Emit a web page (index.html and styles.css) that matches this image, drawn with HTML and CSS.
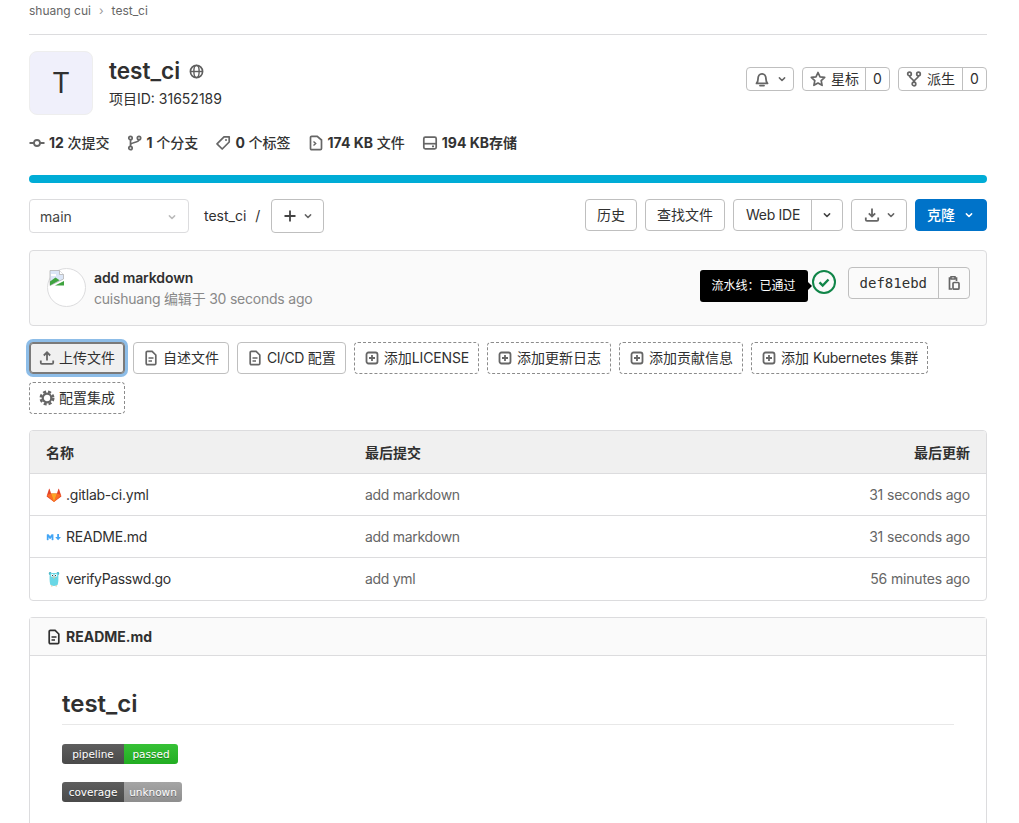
FILE: index.html
```html
<!DOCTYPE html>
<html lang="zh">
<head>
<meta charset="utf-8">
<title>test_ci</title>
<link rel="stylesheet" href="styles.css">
</head>
<body>
<svg class="defs" width="0" height="0">
  <symbol id="chev" viewBox="0 0 16 16"><path d="M4.500 6.500 8 10l3.500-3.500" fill="none" stroke="currentColor" stroke-width="2" stroke-linecap="round" stroke-linejoin="round"/></symbol>
  <symbol id="doc" viewBox="0 0 16 16"><path d="M3.200 2.500c0-.7.500-1.200 1.200-1.200h4.700l3.700 3.700v8.500c0 .7-.500 1.200-1.200 1.200H4.400c-.7 0-1.200-.500-1.200-1.200z" fill="none" stroke="currentColor" stroke-width="1.700"/><path d="M5.500 8h5M5.500 11h3.500" stroke="currentColor" stroke-width="1.600"/></symbol>
  <symbol id="plusbox" viewBox="0 0 16 16"><rect x="2.500" y="2.500" width="11" height="11" rx="2" fill="none" stroke="currentColor" stroke-width="1.800"/><path d="M8 5v6M5 8h6" stroke="currentColor" stroke-width="1.800"/></symbol>
</svg>
<div class="page">
  <nav class="crumbs"><span>shuang cui</span><span class="sep">›</span><span>test_ci</span></nav>

  <header class="proj">
    <div class="avatar">T</div>
    <div class="proj-info">
      <h1 class="proj-title">test_ci <svg class="ico globe" viewBox="0 0 16 16"><circle cx="8" cy="8" r="6.500" fill="none" stroke="currentColor" stroke-width="1.800"/><ellipse cx="8" cy="8" rx="2.800" ry="6.500" fill="none" stroke="currentColor" stroke-width="1.500"/><path d="M2 8h12" stroke="currentColor" stroke-width="1.500"/></svg></h1>
      <div class="proj-id">项目ID: 31652189</div>
    </div>
    <div class="proj-actions">
      <button class="btn small bell"><svg class="ico" viewBox="0 0 16 16"><path d="M2.500 12.400c1-1 1.500-2 1.500-4.400 0-2.800 1.500-5.200 4-5.200s4 2.400 4 5.200c0 2.400.5 3.400 1.500 4.400z" fill="none" stroke="currentColor" stroke-width="1.800" stroke-linejoin="round"/><path d="M6 14.600h4" stroke="currentColor" stroke-width="1.800" stroke-linecap="round"/></svg><svg class="chev"><use href="#chev"/></svg></button>
      <div class="split small"><span class="seg"><svg class="ico" viewBox="0 0 16 16"><path d="m8 1.500 2 4.300 4.700.6-3.500 3.200.9 4.700L8 12l-4.100 2.300.9-4.700-3.500-3.200L6 5.800z" fill="none" stroke="currentColor" stroke-width="1.700" stroke-linejoin="round"/></svg>星标</span><span class="seg count">0</span></div>
      <div class="split small"><span class="seg wide"><svg class="ico" viewBox="0 0 16 16"><circle cx="3.500" cy="3" r="1.800" fill="none" stroke="currentColor" stroke-width="1.700"/><circle cx="12.500" cy="3" r="1.800" fill="none" stroke="currentColor" stroke-width="1.700"/><circle cx="8" cy="13" r="1.800" fill="none" stroke="currentColor" stroke-width="1.700"/><path d="M3.500 4.800c0 3 4.500 2.800 4.500 6.400M12.500 4.800c0 3-4.500 2.800-4.500 6.400" fill="none" stroke="currentColor" stroke-width="1.700"/></svg>派生</span><span class="seg count">0</span></div>
    </div>
  </header>

  <div class="stats">
    <span class="stat"><svg class="ico" viewBox="0 0 16 16"><circle cx="8" cy="8" r="3" fill="none" stroke="currentColor" stroke-width="1.800"/><path d="M0.500 8h4.500M11 8h4.500" stroke="currentColor" stroke-width="1.800"/></svg><span><b>12</b> 次提交</span></span>
    <span class="stat"><svg class="ico" viewBox="0 0 16 16"><circle cx="3.500" cy="3" r="1.700" fill="none" stroke="currentColor" stroke-width="1.700"/><circle cx="3.500" cy="13" r="1.700" fill="none" stroke="currentColor" stroke-width="1.700"/><circle cx="12" cy="3" r="1.700" fill="none" stroke="currentColor" stroke-width="1.700"/><path d="M3.500 4.700v6.600M12 4.700c0 3-8.500 2.500-8.500 5" fill="none" stroke="currentColor" stroke-width="1.700"/></svg><span><b>1</b> 个分支</span></span>
    <span class="stat"><svg class="ico" viewBox="0 0 16 16"><path d="M9 1.800h5.200V7l-7 7-5.200-5.200z" fill="none" stroke="currentColor" stroke-width="1.700" stroke-linejoin="round"/><circle cx="11" cy="5" r="1" fill="currentColor"/></svg><span><b>0</b> 个标签</span></span>
    <span class="stat"><svg class="ico" viewBox="0 0 16 16"><path d="M2.500 2.500c0-.7.500-1.200 1.200-1.200h5.500L13.500 5v8.500c0 .7-.500 1.200-1.200 1.200H3.700c-.7 0-1.200-.500-1.200-1.200z" fill="none" stroke="currentColor" stroke-width="1.700"/><path d="m5.500 6.500 2.200 2-2.200 2" fill="none" stroke="currentColor" stroke-width="1.400"/></svg><span><b>174 KB</b> 文件</span></span>
    <span class="stat"><svg class="ico" viewBox="0 0 16 16"><rect x="1.800" y="2.200" width="12.400" height="11.600" rx="1.500" fill="none" stroke="currentColor" stroke-width="1.700"/><path d="M2 8.700h12" stroke="currentColor" stroke-width="1.700"/><path d="M10 11.300h2" stroke="currentColor" stroke-width="1.700"/></svg><span><b>194 KB存储</b></span></span>
  </div>

  <div class="langbar"></div>

  <div class="tree-bar">
    <div class="branch"><span>main</span><svg class="chev light"><use href="#chev"/></svg></div>
    <span class="path">test_ci</span><span class="slash">/</span>
    <button class="btn add"><svg class="ico" viewBox="0 0 16 16"><path d="M8 2.500v11M2.500 8h11" stroke="currentColor" stroke-width="1.800"/></svg><svg class="chev"><use href="#chev"/></svg></button>
    <div class="tree-actions">
      <button class="btn">历史</button>
      <button class="btn">查找文件</button>
      <div class="split"><span class="seg ide">Web IDE</span><span class="seg caret"><svg class="chev dark"><use href="#chev"/></svg></span></div>
      <button class="btn dl"><svg class="ico" viewBox="0 0 16 16"><path d="M8 1.500V9M4.800 6.300 8 9.500l3.200-3.200" fill="none" stroke="currentColor" stroke-width="1.800"/><path d="M1.800 10.500v2.200c0 .7.500 1.200 1.200 1.200h10c.7 0 1.200-.500 1.200-1.200v-2.200" fill="none" stroke="currentColor" stroke-width="1.800"/></svg><svg class="chev"><use href="#chev"/></svg></button>
      <button class="btn primary">克隆<svg class="chev white"><use href="#chev"/></svg></button>
    </div>
  </div>

  <section class="commit">
    <div class="commit-avatar"><svg class="broken" viewBox="0 0 16 16"><path d="M1 .5h9.500L14.500 4.500V9L1 15.500z" fill="#dbe6f7" stroke="#b4b4b4" stroke-width=".8"/><path d="M2 4h5v2H2z" fill="#fff"/><path d="M1 11.500l5.500-4 4 2.800L1 15.500z" fill="#3fa33f"/><path d="M15 11v4.500H6z" fill="#3fa33f"/><path d="M10.500 .5v4h4" fill="#fff" stroke="#b4b4b4" stroke-width=".8"/></svg></div>
    <div class="commit-text">
      <div class="commit-title">add markdown</div>
      <div class="commit-meta">cuishuang 编辑于 30 seconds ago</div>
    </div>
    <div class="commit-side">
      <div class="pipeline">
        <div class="tooltip">流水线：已通过</div>
        <svg class="status" viewBox="0 0 24 24"><circle cx="12" cy="12" r="11" fill="none" stroke="#108548" stroke-width="2"/><path d="m7.500 12.300 3.200 3.200 5.800-6" fill="none" stroke="#108548" stroke-width="2.400"/></svg>
      </div>
      <div class="split sha"><span class="seg hash">def81ebd</span><span class="seg copy"><svg class="ico" viewBox="0 0 16 16"><path d="M5 3H3.500v11H6" fill="none" stroke="currentColor" stroke-width="1.700"/><path d="M5 1.800h4V4H5z" fill="none" stroke="currentColor" stroke-width="1.500"/><path d="M9 3h1.500v3" fill="none" stroke="currentColor" stroke-width="1.700"/><rect x="7" y="7.500" width="6" height="6.700" rx="1" fill="none" stroke="currentColor" stroke-width="1.700"/></svg></span></div>
    </div>
  </section>

  <div class="quick">
    <button class="btn q focus"><svg class="ico" viewBox="0 0 16 16"><path d="M8 10.500V2.500M4.800 5.500 8 2.300l3.200 3.200" fill="none" stroke="currentColor" stroke-width="1.800"/><path d="M1.800 10.500v2.200c0 .7.500 1.200 1.200 1.200h10c.7 0 1.200-.500 1.200-1.200v-2.200" fill="none" stroke="currentColor" stroke-width="1.800"/></svg><span>上传文件</span></button>
    <button class="btn q"><svg class="ico"><use href="#doc"/></svg><span>自述文件</span></button>
    <button class="btn q"><svg class="ico"><use href="#doc"/></svg><span><span class="lat">CI/CD</span> 配置</span></button>
    <button class="btn q dashed"><svg class="ico"><use href="#plusbox"/></svg><span>添加<span class="lat2">LICENSE</span></span></button>
    <button class="btn q dashed"><svg class="ico"><use href="#plusbox"/></svg><span>添加更新日志</span></button>
    <button class="btn q dashed"><svg class="ico"><use href="#plusbox"/></svg><span>添加贡献信息</span></button>
    <button class="btn q dashed"><svg class="ico"><use href="#plusbox"/></svg><span>添加 <span class="lat3">Kubernetes</span> 集群</span></button>
    <button class="btn q dashed"><svg class="ico" viewBox="0 0 16 16"><circle cx="8" cy="8" r="6.300" fill="none" stroke="currentColor" stroke-width="2.400" stroke-dasharray="3 2"/><circle cx="8" cy="8" r="4.300" fill="none" stroke="currentColor" stroke-width="2.200"/></svg><span>配置集成</span></button>
  </div>

  <table class="files">
    <thead><tr><th class="c1">名称</th><th class="c2">最后提交</th><th class="c3">最后更新</th></tr></thead>
    <tbody>
      <tr><td><span class="fname"><svg class="ficon" viewBox="0 0 16 16"><path d="M8 15 1 9.800c-.3-.2-.4-.500-.3-.9L3 2c.1-.3.500-.3.600 0l1.500 4.600h5.800L12.400 2c.1-.3.500-.3.600 0l2.300 6.900c.1.400 0 .7-.3.900z" fill="#e24329"/><path d="M8 15 .8 8.300l4.300-1.700zM8 15l7.200-6.700-4.300-1.700z" fill="#fc6d26"/><path d="M8 15 5.100 6.600h5.800z" fill="#fca326"/></svg>.gitlab-ci.yml</span></td><td class="msg">add markdown</td><td class="age">31 seconds ago</td></tr>
      <tr><td><span class="fname"><svg class="ficon" viewBox="0 0 16 16"><path d="M1 11V5.500h1.600l1.500 2 1.500-2h1.600V11H5.900V8L4.100 10 2.300 8v3z" fill="#42a5f5" stroke="#42a5f5" stroke-width=".4"/><path d="M11.200 5h1.800v3h2l-2.900 3.200L9.200 8h2z" fill="#42a5f5"/></svg>README.md</span></td><td class="msg">add markdown</td><td class="age">31 seconds ago</td></tr>
      <tr><td><span class="fname tight"><svg class="ficon" viewBox="0 0 16 16"><rect x="2.800" y="1" width="2.600" height="3" rx="1.200" fill="#4db6c6"/><rect x="10.600" y="1" width="2.600" height="3" rx="1.200" fill="#4db6c6"/><path d="M3.800 2.500c1.500-.8 6.900-.8 8.400 0 .4 4 .3 8-.4 10.800-.3 1-1.500 1.700-3.800 1.700s-3.500-.7-3.800-1.700C3.500 10.500 3.400 6.500 3.800 2.500z" fill="#6ad7e5"/><circle cx="6.300" cy="4.500" r="1.400" fill="#fff"/><circle cx="9.700" cy="4.500" r="1.400" fill="#fff"/><circle cx="6.500" cy="4.600" r=".6" fill="#222"/><circle cx="9.500" cy="4.600" r=".6" fill="#222"/><rect x="7.200" y="5.800" width="1.600" height="1.500" fill="#e8c9a0"/><path d="M5 15h1.500M9.500 15H11" stroke="#e8c9a0" stroke-width="1"/></svg>verifyPasswd.go</span></td><td class="msg">add yml</td><td class="age">56 minutes ago</td></tr>
    </tbody>
  </table>

  <section class="readme">
    <div class="readme-head"><svg class="ico"><use href="#doc"/></svg><b>README.md</b></div>
    <div class="readme-body">
      <h2 class="readme-title">test_ci</h2>
      <p class="badge-line"><span class="badge"><span class="bl">pipeline</span><span class="br ok">passed</span></span></p>
      <p class="badge-line"><span class="badge"><span class="bl">coverage</span><span class="br none">unknown</span></span></p>
    </div>
  </section>
</div>
</body>
</html>
```

FILE: styles.css
```css
* { box-sizing: border-box; }
html, body { margin: 0; height: 823px; overflow: hidden; }
body { background: #fff; color: #303030; font: 14px/20px Inter, "Noto Sans CJK SC", sans-serif; }
.defs { position: absolute; }
.page { padding: 0 32px 0 29px; }
.ico { width: 16px; height: 16px; flex: none; color: #666; }
.chev { width: 12px; height: 12px; flex: none; color: #666; }
.chev.light { color: #bbb; }
.chev.dark { color: #444; }
.chev.white { color: #fff; }

.crumbs { height: 35px; padding-top: 1px; border-bottom: 1px solid #dcdcde; font-size: 12px; line-height: 20px; color: #666; display: flex; gap: 8px; align-items: flex-start; }
.crumbs .sep { color: #999; }

.proj { display: flex; margin-top: 16px; }
.avatar { width: 64px; height: 64px; background: #f0f0fb; border: 1px solid #eee; border-radius: 8px; display: flex; align-items: center; justify-content: center; font-size: 28px; color: #303030; }
.proj-info { margin-left: 16px; padding-top: 6px; }
.proj-title { margin: 0; font-size: 22.600px; line-height: 28px; font-weight: 600; display: flex; align-items: center; gap: 9px; }
.globe { width: 15px; height: 15px; color: #5f5f5f; }
.proj-id { margin-top: 4px; }
.proj-actions { margin-left: auto; display: flex; gap: 8px; padding-top: 16px; align-items: flex-start; }

.btn { height: 32px; padding: 0 11px; border: 1px solid #bfbfbf; border-radius: 4px; background: #fff; color: #303030; font: inherit; display: inline-flex; align-items: center; justify-content: center; gap: 5px; }
.btn.small { height: 24px; }
.btn.bell { padding: 0 5px 0 7px; gap: 6px; }
.split { display: inline-flex; height: 32px; border: 1px solid #bfbfbf; border-radius: 4px; background: #fff; }
.split.small { height: 24px; }
.seg { display: inline-flex; align-items: center; padding: 0 6px 0 7px; gap: 5px; }
.seg.wide { padding-right: 7px; }
.seg + .seg { border-left: 1px solid #bfbfbf; }
.count { width: 24px; padding: 0; justify-content: center; }

.stats { display: flex; margin-top: 18px; gap: 17px; line-height: 20px; color: #333; }
.stat { display: inline-flex; align-items: center; gap: 4px; font-weight: 500; white-space: nowrap; }
.stat b { font-weight: 700; }

.langbar { height: 8px; margin-top: 22px; background: #00acd6; border-radius: 4px; }

.tree-bar { display: flex; align-items: flex-start; margin-top: 16px; height: 34px; }
.branch { width: 160px; height: 34px; padding: 1px 10px 0; border: 1px solid #dcdcde; border-radius: 4px; display: flex; align-items: center; justify-content: space-between; color: #444; }
.path { margin: 7px 0 0 15px; }
.slash { margin: 7px 11px 0 9px; }
.btn.add { height: 34px; padding: 0 9px; gap: 4px; width: 53px; }
.add .ico { color: #444; }
.tree-actions { margin-left: auto; display: flex; gap: 8px; }
.ide { padding: 0 11px 0 12px; letter-spacing: -.3px; }
.caret { width: 31px; padding: 0; justify-content: center; }
.btn.dl { padding: 0 9px 0 12px; }
.btn.primary { background: #0073c9; border-color: #0073c9; color: #fff; font-weight: 500; padding: 0 11px; gap: 8px; }

.commit { margin-top: 17px; height: 76px; border: 1px solid #dcdcde; border-radius: 4px; background: #fafafa; padding: 16px 16px 0 17px; display: flex; align-items: flex-start; }
.commit-avatar { width: 39px; height: 39px; margin-top: 1px; border: 1px solid #dcdcde; border-radius: 50%; background: #fff; flex: none; padding: 1px 0 0 1px; }
.broken { display: block; width: 16px; height: 16px; }
.commit-text { margin: 1px 0 0 8px; }
.commit-title { font-weight: 600; color: #303030; letter-spacing: -.1px; }
.commit-meta { margin-top: 1px; color: #898989; letter-spacing: -.22px; }
.commit-side { margin-left: auto; display: flex; align-items: flex-start; gap: 12px; }
.pipeline { position: relative; display: flex; margin-top: 3px; }
.status { width: 24px; height: 24px; display: block; }
.tooltip { position: absolute; right: 28px; top: 0; width: 108px; height: 32px; background: #000; color: #fff; border-radius: 3px; font-size: 12px; line-height: 32px; text-align: center; white-space: nowrap; }
.tooltip::after { content: ""; position: absolute; right: -4px; top: 12px; border-left: 4px solid #000; border-top: 4px solid transparent; border-bottom: 4px solid transparent; }
.sha { background: #fafafa; }
.hash { font-family: "DejaVu Sans Mono", monospace; font-size: 14px; padding: 0 11px; }
.copy { padding: 0; width: 31px; justify-content: center; }

.quick { display: flex; flex-wrap: wrap; gap: 8px; margin-top: 16px; }
.btn.q { height: 32px; padding: 0 9px; gap: 4px; }
.q.focus { background: #f0f0f0; border-color: #7a7a7a; box-shadow: 0 0 0 1px #7a7a7a inset, 0 0 0 3px #8dbde8; }
.q.dashed { border: 1px dashed #8c8c8c; }
.lat { letter-spacing: -.5px; }
.lat2 { letter-spacing: -.15px; }
.lat3 { letter-spacing: -.25px; }

.files { width: 100%; margin-top: 16px; border-collapse: separate; border-spacing: 0; border: 1px solid #dcdcde; border-radius: 4px; table-layout: fixed; }
.files th { height: 43px; padding: 1px 16px 0; background: #f0f0f0; border-bottom: 1px solid #dcdcde; font-weight: 600; text-align: left; }
.files th:first-child { border-top-left-radius: 3px; }
.files th:last-child { border-top-right-radius: 3px; }
.files td { height: 42px; padding: 0 16px; border-bottom: 1px solid #dcdcde; }
.files tr:last-child td { border-bottom: 0; }
.c1 { width: 319px; }
.c2 { width: auto; }
.files .c3 { text-align: right; width: 300px; }
.msg { color: #666; letter-spacing: -.3px; }
.age { color: #666; letter-spacing: -.17px; text-align: right; }
.fname { display: flex; align-items: center; gap: 4px; letter-spacing: -.22px; }
.fname.tight { letter-spacing: -.35px; }
.ficon { width: 16px; height: 16px; flex: none; }

.readme { margin-top: 16px; border: 1px solid #dcdcde; border-radius: 4px 4px 0 0; border-bottom: 0; height: 206px; }
.readme-head { height: 38px; background: #fafafa; border-bottom: 1px solid #dcdcde; padding: 0 16px; display: flex; align-items: center; gap: 4px; }
.readme-head .ico { color: #303030; }
.readme-body { padding: 32px 32px 0; }
.readme-title { margin: 0; padding-bottom: 4px; border-bottom: 1px solid #e8e8e8; font-size: 24px; line-height: 32px; font-weight: 600; }
.badge-line { margin: 19px 0 0; line-height: 20px; display: flex; }
.badge-line + .badge-line { margin-top: 18px; }
.badge { display: inline-flex; height: 20px; border-radius: 3px; overflow: hidden; font: 10.500px/20px "DejaVu Sans", sans-serif; color: #fff; text-shadow: 0 1px rgba(0,0,0,.3); }
.bl { width: 62px; text-align: center; background: linear-gradient(#5e5e5e, #4a4a4a); }
.br { text-align: center; }
.ok { width: 54px; background: linear-gradient(#36c136, #22ad22); }
.none { width: 58px; background: linear-gradient(#a5a5a5, #8e8e8e); }
```
